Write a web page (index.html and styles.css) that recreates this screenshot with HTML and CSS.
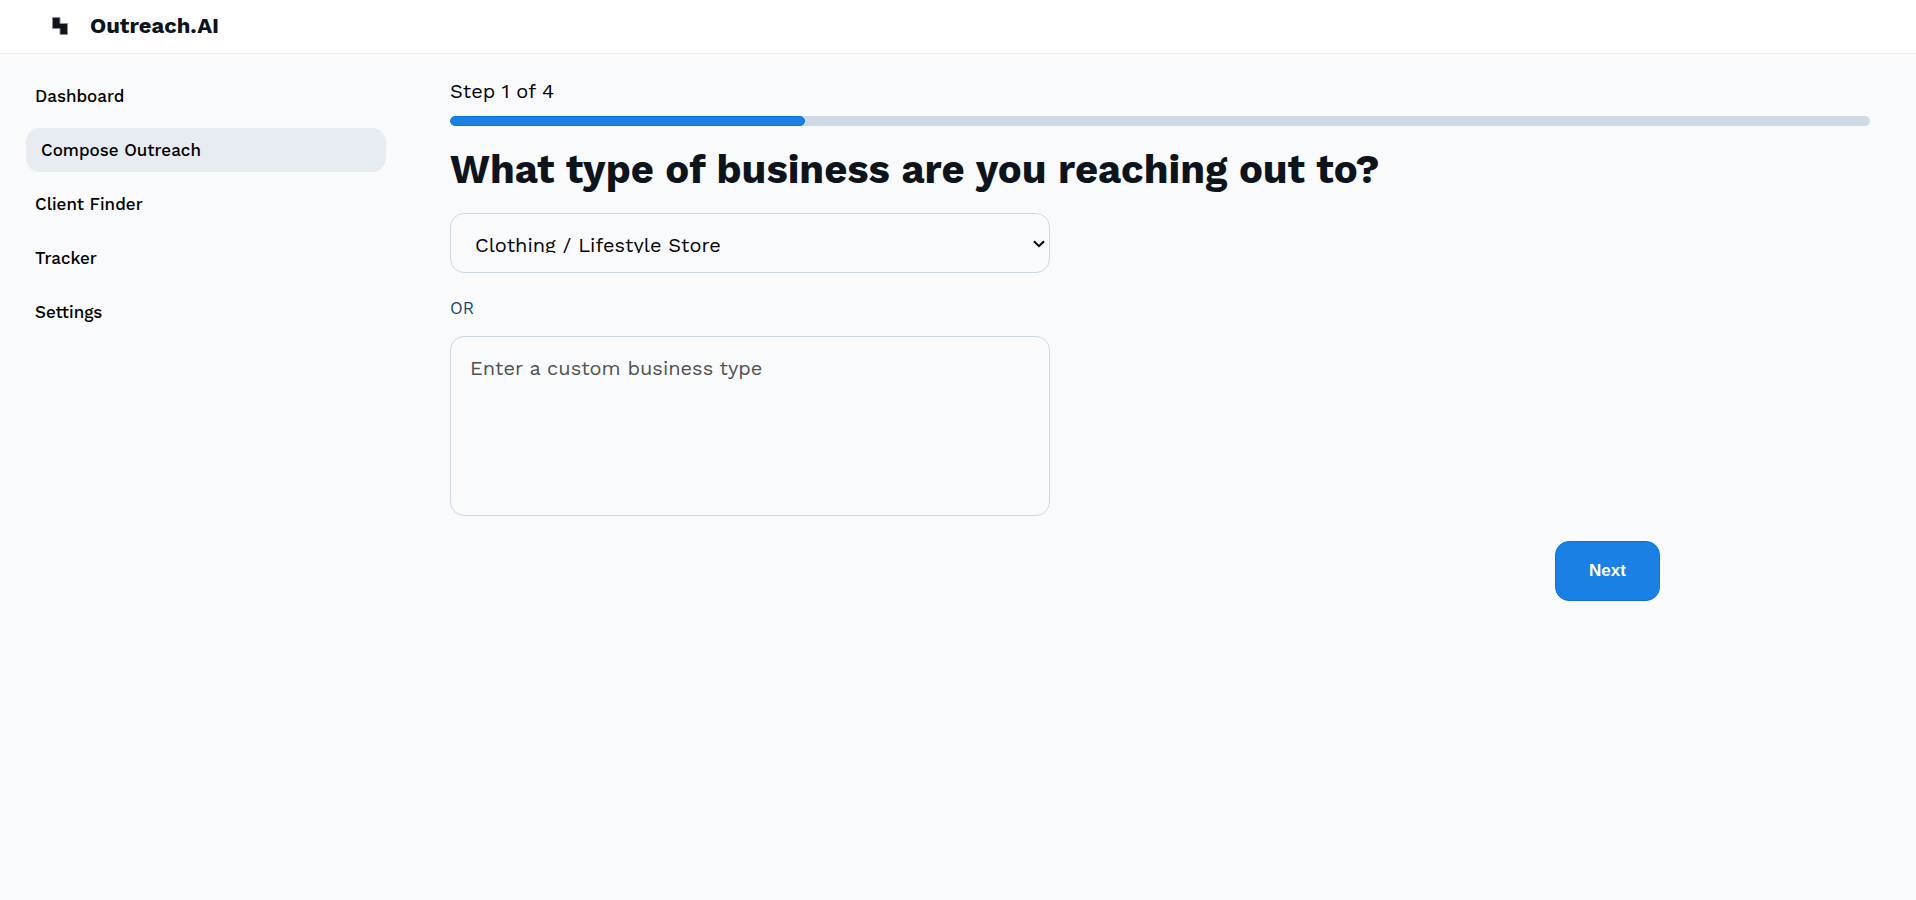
FILE: index.html
```html
<!DOCTYPE html>
<html lang="en">
<head>
<meta charset="utf-8">
<title>Outreach.AI</title>
<link rel="stylesheet" href="styles.css">
</head>
<body>
<header class="topbar">
  <svg class="logo" width="16" height="18" viewBox="0 0 16 18" aria-hidden="true"><path d="M0.5 0.5H8V6.5H15.5V17.5H8V11.5H0.5Z" fill="#0d141c" stroke="#8b9096"/></svg>
  <span class="brand">Outreach.AI</span>
</header>
<div class="layout">
  <nav class="sidebar">
    <a class="nav-link" href="#">Dashboard</a>
    <a class="nav-link active" href="#" aria-current="page">Compose Outreach</a>
    <a class="nav-link" href="#">Client Finder</a>
    <a class="nav-link" href="#">Tracker</a>
    <a class="nav-link" href="#">Settings</a>
  </nav>
  <main class="content">
    <p class="step">Step 1 of 4</p>
    <div class="progress" role="progressbar" aria-label="Step 1 of 4" aria-valuemin="0" aria-valuemax="4" aria-valuenow="1"><div class="progress-fill" style="width: 25%"></div></div>
    <h1 class="title" id="question">What type of business are you reaching out to?</h1>
    <form class="form">
      <div class="picker-wrap">
        <select class="field picker" aria-labelledby="question">
          <option>Clothing / Lifestyle Store</option>
        </select>
        <svg class="chevron" width="12" height="8" viewBox="0 0 12 8" aria-hidden="true"><path d="M1 1.2L6 6.2L11 1.2" fill="none" stroke="#000" stroke-width="2"/></svg>
      </div>
      <label class="or" for="custom">OR</label>
      <textarea class="field custom" id="custom" placeholder="Enter a custom business type"></textarea>
      <button class="next" type="button">Next</button>
    </form>
  </main>
</div>
</body>
</html>
```
FILE: styles.css
```css
* {
  box-sizing: border-box;
}

body {
  margin: 0;
  min-height: 100vh;
  background: #f9fafc;
  color: #000;
  font-family: "Work Sans", Inter, "Noto Sans", sans-serif;
}

.topbar {
  display: flex;
  align-items: center;
  gap: 22px;
  height: 54px;
  padding: 0 52px 2px;
  background: #fff;
  border-bottom: 1px solid #e7ebf2;
}

.brand {
  color: #0d141c;
  font-size: 22px;
  font-weight: 700;
  line-height: 28px;
}

.layout {
  display: flex;
  gap: 64px;
  padding: 20px 46px 20px 26px;
}

.sidebar {
  display: flex;
  flex: none;
  flex-direction: column;
  gap: 10px;
  width: 360px;
}

.nav-link {
  padding: 10px 9px;
  border-radius: 14px;
  color: #000;
  font-size: 17px;
  font-weight: 500;
  line-height: 24px;
  text-decoration: none;
}

.nav-link.active {
  padding: 10px 15px;
  background: #e7ecf3;
}

.content {
  flex: 1;
  min-width: 0;
}

.step {
  margin: 5px 0 13px;
  font-size: 20px;
  line-height: 24px;
}

.progress {
  height: 10px;
  overflow: hidden;
  border-radius: 5px;
  background: #d0dae6;
}

.progress-fill {
  height: 100%;
  border: 1px solid #0b72e2;
  border-radius: 5px;
  background: #1a80e6;
}

.title {
  margin: 20px 0;
  color: #0d141c;
  font-size: 40px;
  font-weight: 700;
  line-height: 47px;
}

.form {
  display: flex;
  flex-direction: column;
  align-items: flex-start;
}

.field {
  display: block;
  width: 600px;
  max-width: 100%;
  border: 1px solid #cad8e6;
  border-radius: 14px;
  background: #f9fafc;
  color: #000;
  font-family: inherit;
  font-size: 20px;
}

.picker-wrap {
  position: relative;
  max-width: 100%;
}

.picker {
  height: 60px;
  padding: 19px 24px;
  appearance: none;
}

.chevron {
  position: absolute;
  top: 27px;
  right: 5px;
  pointer-events: none;
}

.or {
  margin: 23px 0 16px;
  color: #164773;
  font-size: 17px;
  line-height: 24px;
}

.custom {
  height: 180px;
  padding: 19px;
  line-height: 24px;
  resize: none;
}

.custom::placeholder {
  color: #505050;
}

.next {
  align-self: flex-end;
  width: 105px;
  height: 60px;
  margin: 25px 210px 0 0;
  border: 1px solid #0b72e2;
  border-radius: 14px;
  background: #1a80e6;
  color: #fff;
  font: 700 17px "Liberation Sans", Arial, sans-serif;
}
```
